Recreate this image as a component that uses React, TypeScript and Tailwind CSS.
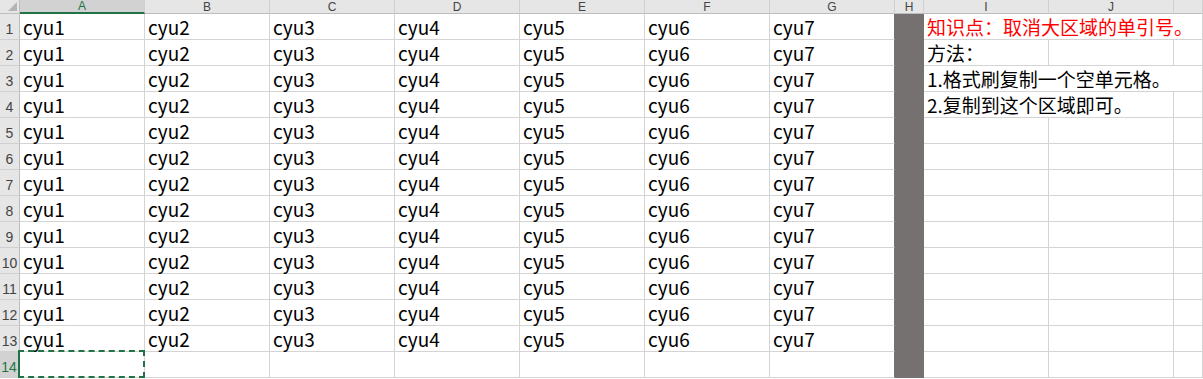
import type { FunctionComponent } from "react";

const COLS = ["A", "B", "C", "D", "E", "F", "G", "H", "I", "J", ""];
const ROW_COUNT = 14;

// text that lives in column I, keyed by row
const notes: Record<number, { text: string; red?: boolean; span: number }> = {
  1: { text: "知识点：取消大区域的单引号。", red: true, span: 3 },
  2: { text: "方法：", span: 1 },
  3: { text: "1.格式刷复制一个空单元格。", span: 3 },
  4: { text: "2.复制到这个区域即可。", span: 2 },
};

const FONT = "font-['Noto_Sans_CJK_SC','Noto_Sans',sans-serif]";

const ColumnHeader: FunctionComponent<{ label: string; index: number }> = ({
  label,
  index,
}) => {
  const active = index === 0;
  return (
    <div
      className={`flex items-center justify-center border-r border-[#d0d0d0] text-[12px] leading-[12px] font-['Liberation_Sans',sans-serif] ${
        active
          ? "bg-[#d2d2d2] text-[#217346] border-b-2 border-b-[#217346]"
          : "bg-[#e6e6e6] text-[#444] border-b border-b-[#bdbdbd]"
      }`}
    >
      <span>{label}</span>
    </div>
  );
};

const RowHeader: FunctionComponent<{ n: number }> = ({ n }) => {
  const active = n === ROW_COUNT;
  return (
    <div
      className={`flex items-end justify-center border-b border-[#d0d0d0] text-[14px] leading-[14px] font-['Liberation_Sans',sans-serif] ${
        active
          ? "bg-[#d2d2d2] text-[#217346] border-r-2 border-r-[#217346]"
          : "bg-[#e6e6e6] text-[#444] border-r border-r-[#bdbdbd]"
      }`}
    >
      <span className="pb-[3px]">{n}</span>
    </div>
  );
};

const Cell: FunctionComponent<{ row: number; col: number }> = ({ row, col }) => {
  const note = notes[row];
  // H is the filled column
  if (col === 7) {
    return <div className="bg-[#767171]" />;
  }
  // hide gridlines where column I text overflows
  const hideRight = note && col >= 8 && col < 8 + note.span - 1;
  const rightCls =
    col === 6
      ? "border-r border-r-[#767171]"
      : hideRight
        ? ""
        : "border-r border-r-[#d4d4d4]";

  let content: React.ReactNode = null;
  if (row < ROW_COUNT && col < 7) {
    content = <span>{`cyu${col + 1}`}</span>;
  }
  if (note && col === 8) {
    content = (
      <span
        className={`relative z-10 whitespace-nowrap text-[19px] leading-[19px] ${
          note.red ? "text-[#ff0000]" : "text-black"
        }`}
      >
        {note.text}
      </span>
    );
  }

  return (
    <div
      className={`relative flex items-end pl-[3px] pb-[3px] border-b border-b-[#d4d4d4] ${rightCls} text-[19px] leading-[19px] text-black ${FONT}`}
    >
      {content}
      {row === ROW_COUNT && col === 0 && (
        <div className="absolute -left-[2px] -top-[2px] -right-px -bottom-px border-2 border-dashed border-[#217346]" />
      )}
    </div>
  );
};

export default function App() {
  const rows = Array.from({ length: ROW_COUNT }, (_, i) => i + 1);
  return (
    <div className="w-[1203px] h-[379px] overflow-hidden bg-white">
      <div className="grid grid-cols-[20px_repeat(7,125px)_29px_125px_125px_29px] grid-rows-[14px_repeat(14,26px)]">
        {/* corner */}
        <div className="relative bg-[#e6e6e6] border-r border-b border-[#bdbdbd]">
          <div className="absolute right-[2px] bottom-[2px] w-0 h-0 border-l-[9px] border-l-transparent border-b-[9px] border-b-[#b4b4b4]" />
        </div>
        {COLS.map((c, i) => (
          <ColumnHeader key={i} label={c} index={i} />
        ))}
        {rows.map((r) => [
          <RowHeader key={`h${r}`} n={r} />,
          ...COLS.map((_, ci) => <Cell key={`${r}-${ci}`} row={r} col={ci} />),
        ])}
      </div>
    </div>
  );
}
